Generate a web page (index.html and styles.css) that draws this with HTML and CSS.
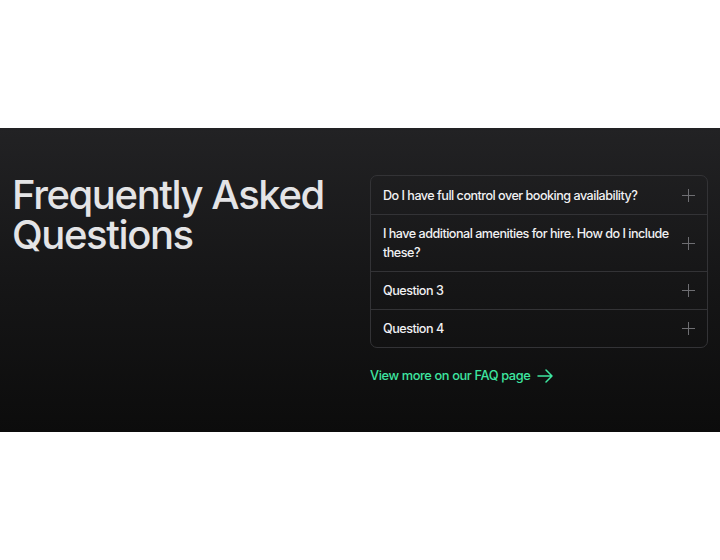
FILE: index.html
```html
<!DOCTYPE html>
<html>
<head>
<meta charset="utf-8">
<link rel="stylesheet" href="styles.css">
</head>
<body>
<div class="top-space"></div>
<section class="faq">
  <h2 class="faq-title">Frequently Asked Questions</h2>
  <div class="faq-right">
    <div class="accordion">
      <div class="item"><span class="q">Do I have full control over booking availability?</span><span class="plus"></span></div>
      <div class="item"><span class="q">I have additional amenities for hire. How do I include these?</span><span class="plus"></span></div>
      <div class="item"><span class="q">Question 3</span><span class="plus"></span></div>
      <div class="item"><span class="q">Question 4</span><span class="plus"></span></div>
    </div>
    <a class="more" href="#">View more on our FAQ page
      <svg width="16" height="14" viewBox="0 0 16 14" fill="none" stroke="currentColor" stroke-width="1.5" stroke-linecap="round" stroke-linejoin="round"><path d="M1 7h14M9 1l6 6-6 6"/></svg>
    </a>
  </div>
</section>
</body>
</html>
```
FILE: styles.css
```css
* { box-sizing: border-box; }
html, body { margin: 0; padding: 0; background: #fff; }
body { font-family: Inter, "Noto Sans", sans-serif; }
.top-space { height: 128px; }
.faq {
  height: 304px;
  background: linear-gradient(180deg, #222224 0%, #161617 50%, #0c0c0c 100%);
  display: grid;
  grid-template-columns: 358px 338px;
  padding: 47px 12px 0 12px;
}
.faq-title {
  margin: 0;
  color: #e4e4e6;
  font-size: 40px;
  font-weight: 500;
  line-height: 40px;
  letter-spacing: -0.035em;
  width: 330px;
}
.faq-right { display: flex; flex-direction: column; align-items: flex-start; }
.accordion {
  width: 100%;
  border: 1px solid #333336;
  border-radius: 7px;
  overflow: hidden;
}
.item {
  display: flex;
  align-items: center;
  justify-content: space-between;
  padding: 9px 12px;
  min-height: 38px;
  border-top: 1px solid #333336;
  color: #f1f1f3;
  font-size: 12.6px;
  font-weight: 500;
  line-height: 19px;
  letter-spacing: -0.04em;
}
.item:first-child { border-top: none; }
.q { max-width: 292px; }
.plus {
  position: relative;
  width: 13px; height: 13px;
  flex: none;
}
.plus::before, .plus::after {
  content: "";
  position: absolute;
  background: #6e6e72;
}
.plus::before { left: 0; right: 0; top: 6px; height: 1px; }
.plus::after { top: 0; bottom: 0; left: 6px; width: 1px; }
.more {
  margin-top: 20px;
  display: flex;
  align-items: center;
  gap: 7px;
  color: #3ee6a0;
  text-decoration: none;
  font-size: 12.8px;
  font-weight: 500;
  letter-spacing: -0.03em;
}
```
